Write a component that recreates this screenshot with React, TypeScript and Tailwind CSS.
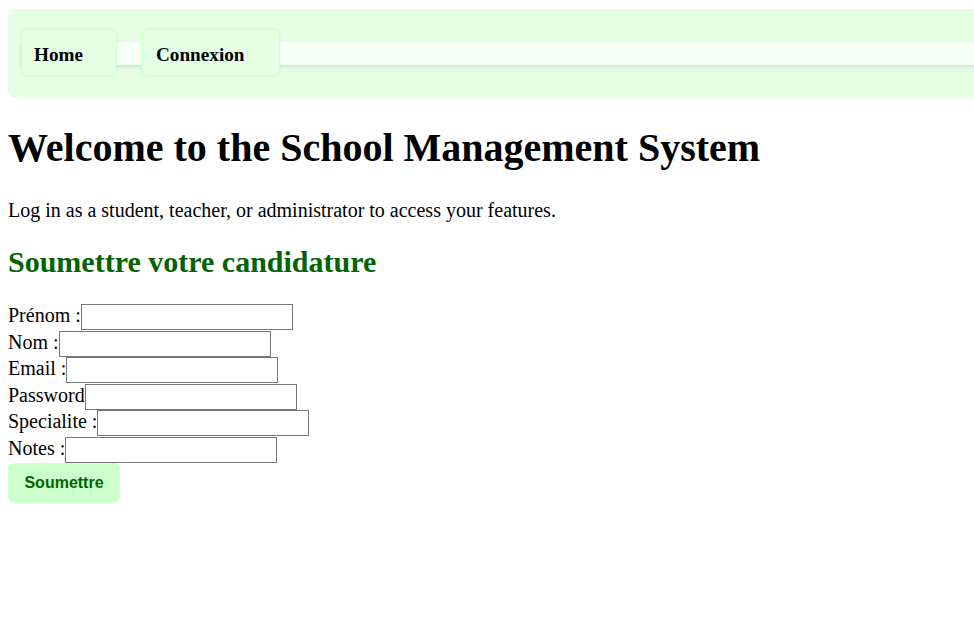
import React from 'react';

const fields = ['Prénom :', 'Nom :', 'Email :', 'Password', 'Specialite :', 'Notes :'];

export default function App() {
  return (
    <div className="w-[974px] min-h-[623px] overflow-hidden bg-white text-black pt-[9px] font-['Liberation_Serif',serif]">
      {/* Navigation */}
      <nav className="ml-2 w-[1000px] h-[88px] bg-[#e5ffe5] rounded-md flex items-center pl-[13px]">
        <ul className="flex-1 h-[23px] bg-[#f7fff7] shadow-[0_2px_4px_rgba(0,0,0,0.1)] flex items-start gap-[25px]">
          <li className="-mt-[13px] w-[96px] h-[47px] shrink-0 flex items-start pt-[15px] pl-[12px] bg-[#e5ffe5] border border-[#ccffcc] rounded-md shadow-[0_0_4px_rgba(0,0,0,0.04)]">
            <a className="text-[19.2px] font-bold leading-none">Home</a>
          </li>
          <li className="-mt-[13px] w-[138px] h-[47px] shrink-0 flex items-start pt-[15px] pl-[13px] bg-[#e5ffe5] border border-[#ccffcc] rounded-md shadow-[0_0_4px_rgba(0,0,0,0.04)]">
            <a className="text-[19.2px] font-bold leading-none">Connexion</a>
          </li>
        </ul>
      </nav>

      <div className="px-2">
        <h1 className="mt-[28px] text-[40px] leading-[46px] font-bold">
          Welcome to the School Management System
        </h1>
        <p className="mt-[28px] text-[20px] leading-[23px]">
          Log in as a student, teacher, or administrator to access your features.
        </p>
        <h2 className="mt-[23px] text-[30px] leading-[34.5px] font-bold text-[#006400]">
          Soumettre votre candidature
        </h2>

        {/* Application form */}
        <form className="mt-[24.5px]" onSubmit={(e) => e.preventDefault()}>
          {fields.map((label) => (
            <div key={label} className="flex h-[26.5px]">
              <label className="text-[20px] leading-[23px] whitespace-nowrap">{label}</label>
              <input
                type="text"
                className="w-[212px] h-[26px] border border-[#767676] bg-white outline-none"
              />
            </div>
          ))}
          <button
            type="submit"
            className="w-[112px] h-[40px] rounded-md bg-[#ccffcc] text-[#006400] font-bold text-[16px] font-['Liberation_Sans',Arial,sans-serif]"
          >
            Soumettre
          </button>
        </form>
      </div>
    </div>
  );
}
